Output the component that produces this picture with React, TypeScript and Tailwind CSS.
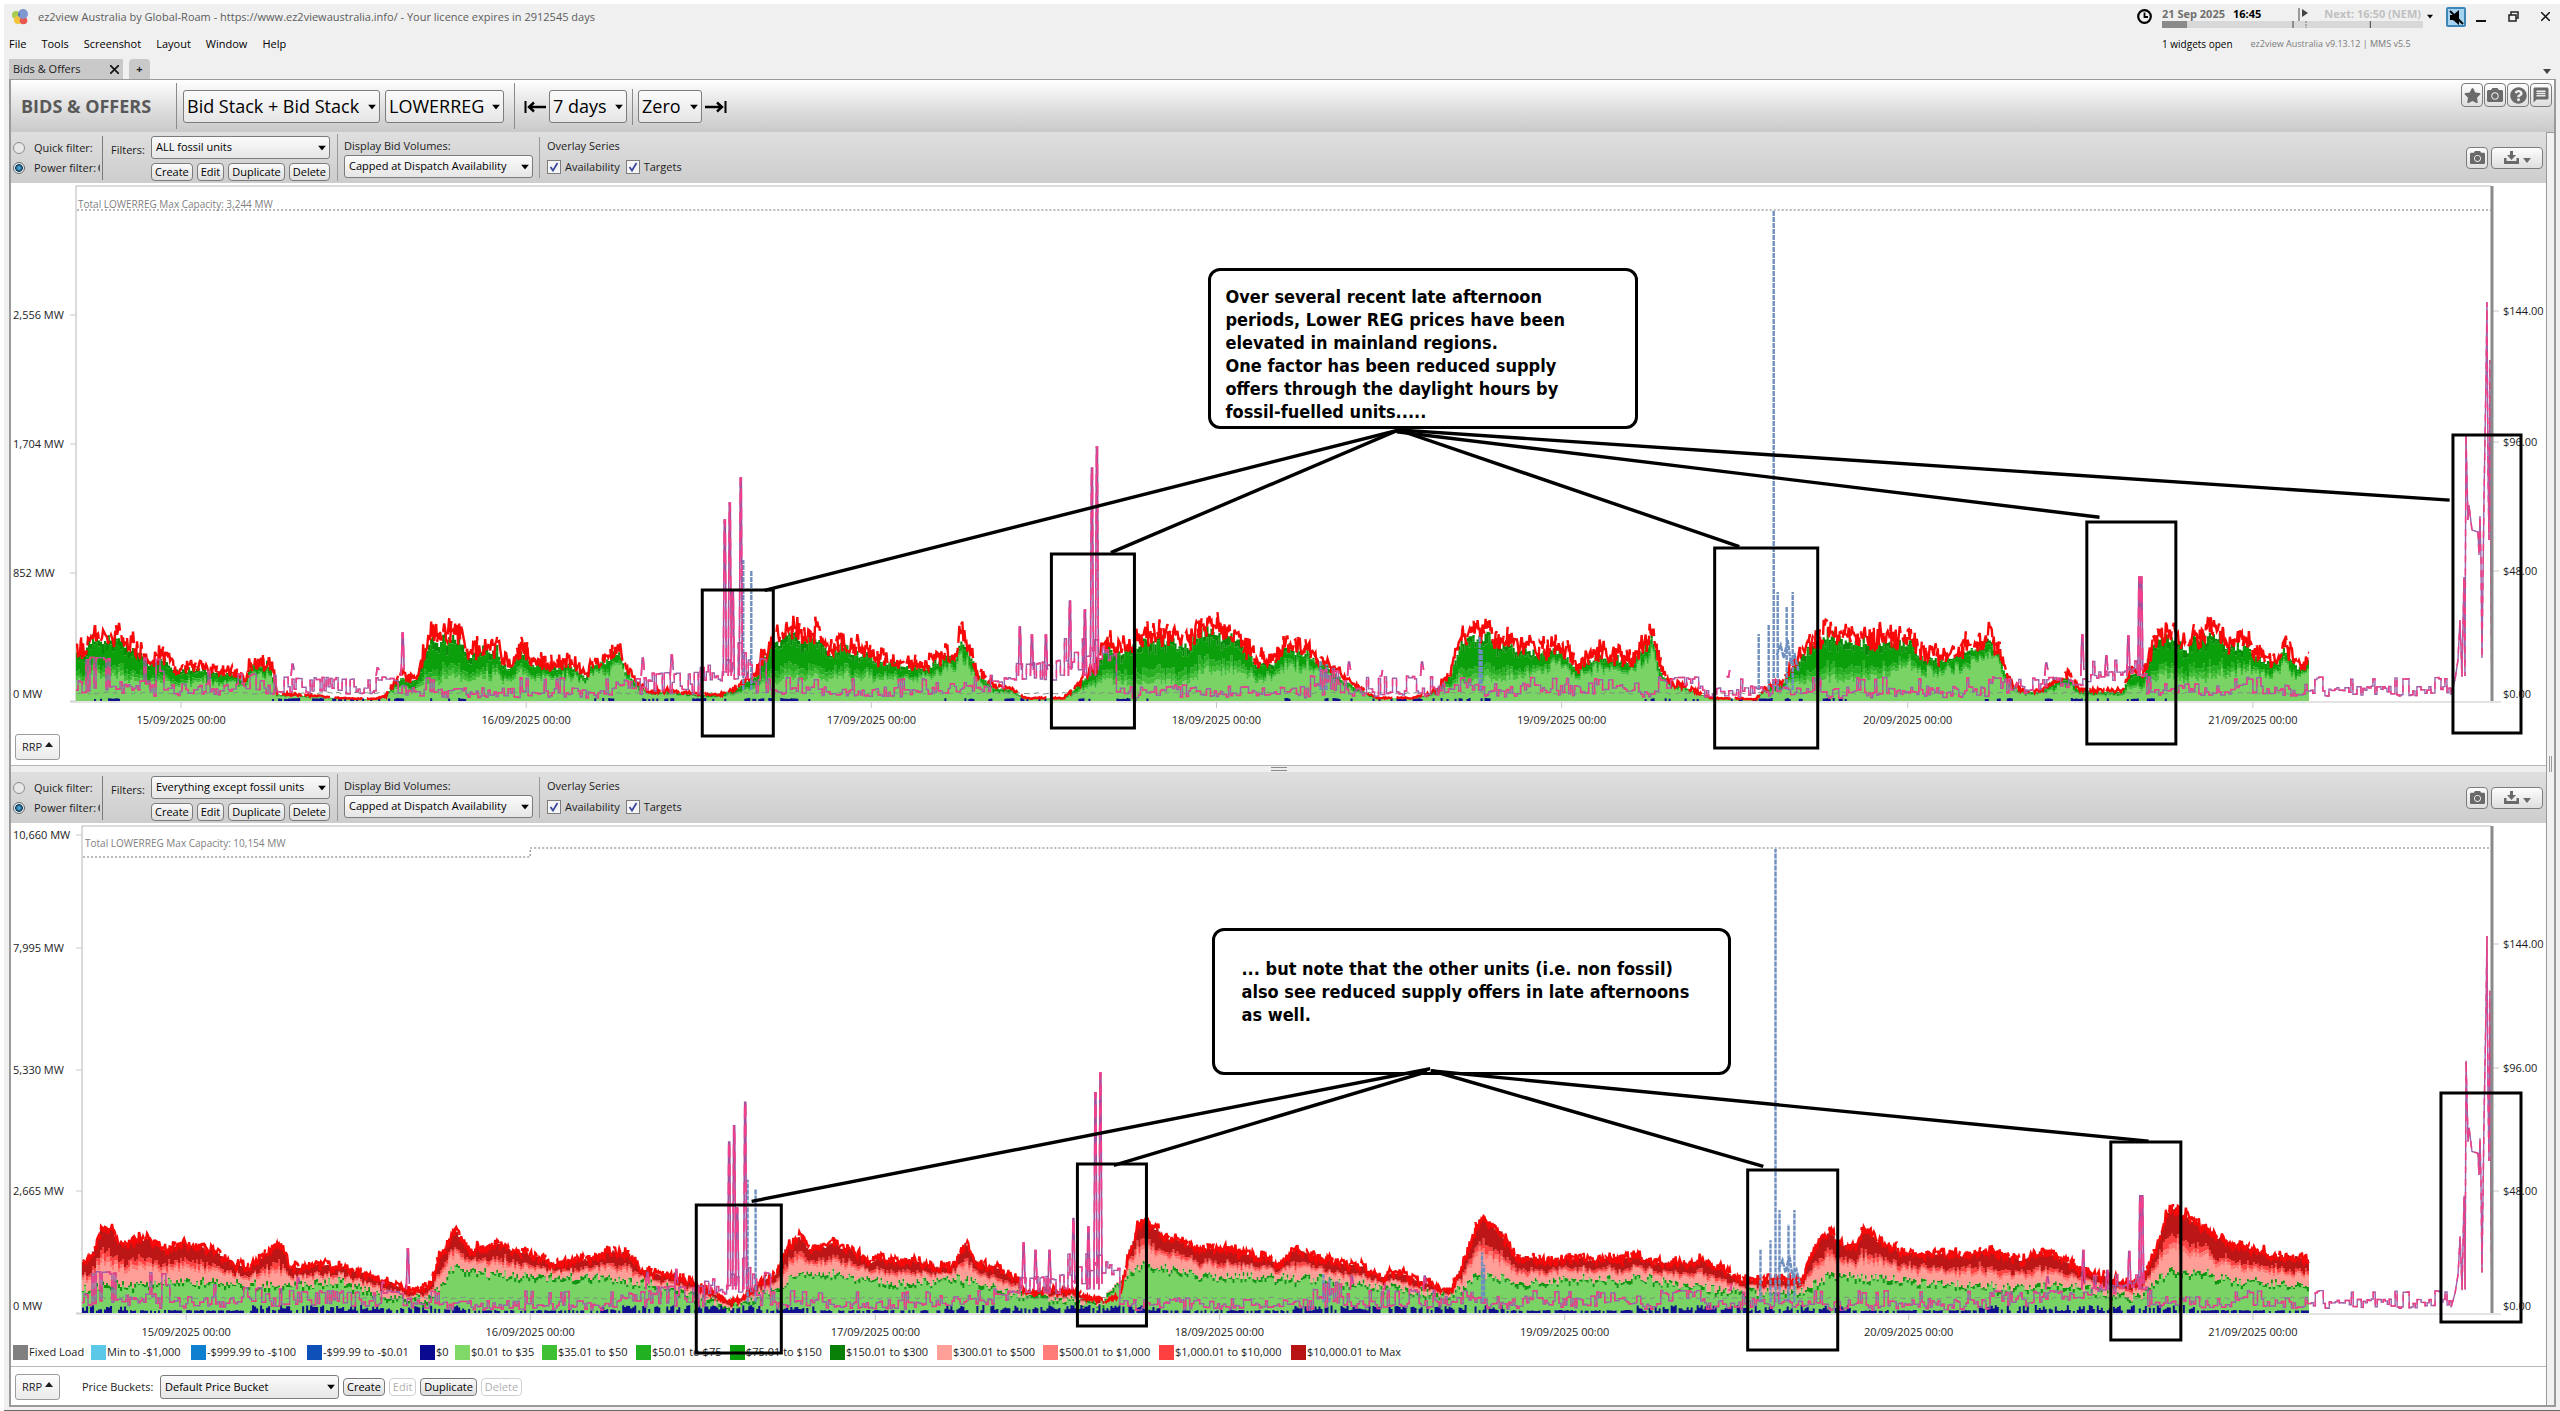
import React, { useState } from 'react';
import { FaCamera, FaQuestionCircle, FaStar } from 'react-icons/fa';
import { MdMessage } from 'react-icons/md';

type Point = [number, number];
type Rect = [number, number, number, number];

// small seeded generator, so the charts draw the same on every render
function makeRandom(seed: number) {
    let s = seed;
    return () => {
        s = (s + 0x6d2b79f5) | 0;
        let t = Math.imul(s ^ (s >>> 15), 1 | s);
        t = (t + Math.imul(t ^ (t >>> 7), 61 | t)) ^ t;
        return ((t ^ (t >>> 14)) >>> 0) / 4294967296;
    };
}

function valueAt(points: Point[], x: number) {
    if (x <= points[0][0]) return points[0][1];
    for (let i = 1; i < points.length; i++) {
        if (x <= points[i][0]) {
            const [x0, y0] = points[i - 1];
            const [x1, y1] = points[i];
            return y0 + ((y1 - y0) * (x - x0)) / (x1 - x0);
        }
    }
    return points[points.length - 1][1];
}

const LEFT = 11;
const WIDTH = 2534;
const BASE = 701;
const DATA_END = 2309;

// availability of the fossil units
const fossilTop: Point[] = [
    [76, 645], [85, 645], [90, 634], [105, 634], [120, 637], [135, 647], [142, 652], [152, 658], [165, 656], [180, 668],
    [200, 663], [215, 672], [230, 668], [245, 680], [250, 662], [270, 658], [274, 680], [277, 694], [300, 695], [340, 698],
    [375, 699], [385, 696], [395, 680], [415, 675], [422, 655], [430, 632], [455, 632], [460, 640], [470, 655], [485, 642],
    [500, 650], [510, 668], [520, 645], [530, 660], [550, 665], [575, 660], [585, 675], [592, 660], [610, 655], [618, 645],
    [625, 665], [632, 675], [640, 685], [650, 692], [670, 690], [700, 695], [720, 694], [735, 688], [755, 675], [765, 650],
    [775, 634], [800, 634], [820, 634], [830, 648], [845, 642], [860, 648], [887, 660], [915, 666], [942, 658], [955, 650],
    [961, 630], [969, 650], [975, 668], [992, 685], [1013, 690], [1024, 698], [1063, 698], [1079, 682], [1096, 662], [1107, 634],
    [1115, 647], [1123, 650], [1134, 637], [1162, 634], [1189, 642], [1200, 630], [1219, 627], [1238, 637], [1255, 655], [1271, 660],
    [1285, 642], [1304, 645], [1315, 655], [1332, 670], [1354, 685], [1376, 698], [1414, 698], [1436, 690], [1450, 670], [1461, 637],
    [1472, 630], [1491, 632], [1513, 642], [1529, 650], [1557, 648], [1578, 662], [1600, 652], [1628, 658], [1646, 640], [1652, 630],
    [1658, 660], [1666, 680], [1683, 686], [1710, 698], [1755, 699], [1763, 690], [1782, 682], [1790, 665], [1801, 655], [1812, 637],
    [1826, 633], [1865, 634], [1892, 640], [1911, 638], [1925, 652], [1947, 657], [1974, 647], [1988, 635], [1999, 650], [2007, 680],
    [2024, 692], [2040, 690], [2051, 682], [2067, 674], [2078, 690], [2122, 690], [2128, 672], [2142, 672], [2150, 650], [2161, 630],
    [2174, 630], [2185, 640], [2207, 627], [2218, 627], [2227, 645], [2246, 637], [2254, 652], [2270, 660], [2284, 650], [2298, 665],
    [2309, 655],
];

// share of the cheapest bucket in the fossil stack
const fossilCheap: Point[] = [
    [76, 0.4], [140, 0.4], [170, 0.5], [270, 0.7], [400, 0.6], [430, 0.3], [470, 0.4], [510, 0.55], [600, 0.7], [640, 0.7],
    [750, 0.5], [775, 0.3], [850, 0.45], [950, 0.72], [1080, 0.5], [1130, 0.3], [1180, 0.3], [1240, 0.5], [1330, 0.7], [1440, 0.6],
    [1465, 0.3], [1510, 0.4], [1560, 0.7], [1660, 0.75], [1780, 0.6], [1810, 0.3], [1880, 0.42], [1930, 0.65], [2000, 0.75], [2150, 0.4],
    [2210, 0.35], [2250, 0.6], [2309, 0.7],
];

// availability of everything else
const otherTop: Point[] = [
    [82, 1263], [90, 1260], [97, 1242], [102, 1229], [112, 1227], [118, 1245], [130, 1240], [150, 1240], [165, 1250], [180, 1242],
    [200, 1245], [215, 1252], [230, 1262], [250, 1267], [265, 1254], [278, 1244], [287, 1258], [290, 1268], [310, 1265], [345, 1268],
    [370, 1275], [395, 1285], [410, 1292], [430, 1285], [438, 1258], [455, 1232], [460, 1240], [470, 1250], [500, 1247], [525, 1252],
    [550, 1262], [590, 1260], [610, 1254], [627, 1250], [640, 1268], [670, 1275], [700, 1285], [715, 1294], [730, 1302], [742, 1298],
    [760, 1282], [775, 1275], [784, 1250], [800, 1236], [810, 1250], [830, 1247], [850, 1250], [870, 1260], [900, 1261], [930, 1264],
    [950, 1268], [966, 1244], [975, 1260], [1000, 1270], [1018, 1278], [1025, 1293], [1050, 1290], [1070, 1290], [1085, 1296], [1105, 1302],
    [1120, 1295], [1128, 1255], [1137, 1225], [1150, 1222], [1165, 1238], [1180, 1240], [1200, 1250], [1222, 1247], [1240, 1254], [1260, 1256],
    [1280, 1264], [1295, 1248], [1320, 1262], [1350, 1264], [1380, 1275], [1405, 1275], [1430, 1285], [1450, 1290], [1460, 1270], [1475, 1228],
    [1484, 1214], [1500, 1232], [1515, 1255], [1545, 1262], [1590, 1260], [1633, 1258], [1660, 1264], [1700, 1260], [1720, 1268], [1740, 1280],
    [1800, 1280], [1812, 1250], [1820, 1237], [1830, 1232], [1840, 1247], [1855, 1243], [1867, 1228], [1875, 1240], [1900, 1252], [1950, 1255],
    [1985, 1252], [2020, 1260], [2040, 1252], [2065, 1262], [2085, 1272], [2120, 1282], [2140, 1282], [2150, 1262], [2165, 1218], [2176, 1208],
    [2185, 1216], [2200, 1227], [2225, 1242], [2250, 1247], [2270, 1257], [2309, 1258],
];

const otherGreen: Point[] = [
    [82, 1290], [110, 1285], [200, 1280], [280, 1285], [340, 1282], [400, 1298], [430, 1298], [455, 1268], [500, 1275], [600, 1278],
    [650, 1282], [700, 1298], [730, 1306], [770, 1292], [800, 1272], [900, 1283], [960, 1278], [1020, 1294], [1100, 1304], [1135, 1265],
    [1150, 1265], [1200, 1275], [1300, 1278], [1400, 1288], [1450, 1296], [1480, 1272], [1520, 1282], [1640, 1278], [1740, 1292], [1800, 1290],
    [1830, 1274], [1900, 1280], [2000, 1287], [2060, 1285], [2140, 1298], [2160, 1276], [2180, 1270], [2240, 1280], [2309, 1287],
];

// regional price: from x, usual level, jitter, chance of a step, level of the step
const priceRanges: [number, number, number, number, number][] = [
    [76, 688, 8, 0.28, 657], [160, 690, 6, 0.14, 670], [230, 687, 7, 0.2, 674], [275, 690, 4, 0.45, 677], [390, 690, 6, 0.2, 678],
    [440, 693, 5, 0.08, 677], [600, 688, 8, 0.25, 677], [650, 688, 7, 0.4, 672], [700, 673, 8, 0.1, 665], [725, 660, 20, 0.1, 650],
    [748, 670, 12, 0.2, 690], [765, 692, 5, 0.12, 677], [935, 688, 6, 0.1, 677], [990, 682, 7, 0.3, 677], [1016, 664, 2, 0.2, 678],
    [1055, 662, 14, 0.2, 636], [1085, 650, 12, 0.2, 660], [1098, 655, 24, 0.2, 690], [1120, 692, 6, 0.1, 685], [1310, 685, 10, 0.2, 668],
    [1345, 692, 5, 0.2, 676], [1436, 690, 7, 0.08, 677], [1655, 686, 8, 0.5, 677], [1700, 692, 6, 0.15, 677], [1990, 688, 6, 0.5, 677],
    [2065, 684, 6, 0.1, 677], [2090, 676, 5, 0.1, 660], [2124, 672, 5, 0.1, 660], [2146, 690, 6, 0.12, 677], [2309, 691, 5, 0.22, 677],
];

const priceSpikes: Point[] = [
    [292, 664], [377, 668], [402, 633], [642, 658], [671, 655], [724, 520], [729, 503], [732, 590], [740, 478], [1019, 627],
    [1031, 635], [1045, 635], [1069, 601], [1084, 610], [1091, 468], [1096, 447], [1348, 662], [1380, 676], [1421, 662], [1727, 677],
    [2045, 663], [2081, 635], [2105, 656], [2127, 636], [2138, 577], [2140, 577],
];

const priceTail: Point[] = [
    [2454, 680], [2457, 660], [2459, 620], [2461, 677], [2463, 577], [2464, 676], [2465, 434], [2467, 520], [2468, 505], [2471, 530],
    [2477, 532], [2478, 555], [2479, 516], [2480, 560], [2481, 658], [2483, 500], [2485, 380], [2486, 302], [2487, 470], [2488, 540],
    [2489, 360], [2490, 600], [2491, 701],
];

const blueSpikes: Point[] = [
    [743, 560], [751, 570], [1320, 660], [1326, 664], [1479, 637], [1481, 650], [1758, 634], [1768, 624], [1773, 210], [1777, 592],
    [1786, 607], [1792, 592],
];

interface ChartProps {
    top: number;
    height: number;
    left: number;
    base: number;
    gridTop: number;
    cap: string;
    capLabel: [number, number, string];
    availability: Point[];
    greens?: Point[];
    priceScale: number;
    yLabels: [string, number][];
    priceLabels: [string, number][];
    dates: number[];
    boxes: Rect[];
    lines: Rect[];
    note: Rect;
    children: React.ReactNode;
    legend?: React.ReactNode;
}

const greenColors = ['#7ad465', '#46bf3a', '#27b021', '#0c9f0c', '#078a07'];
const redColors = ['#7ad465', '#129612', '#ff9e96', '#ff7b76', '#ff4242', '#bd1616'];

function buildStack(p: ChartProps) {
    const random = makeRandom(p.top);
    const colors = p.greens ? redColors : greenColors;
    const paths = colors.map(() => '');
    let navy = '';
    let red = '';
    let mean = '';
    let drift = 0;
    for (let x = p.left + 1; x < DATA_END; x += 2) {
        drift = drift * 0.6 + (random() - 0.5) * (p.greens ? 0.07 : 0.12);
        const edge = p.base - (p.base - valueAt(p.availability, x)) * (1 + drift);
        const h = p.base - edge;
        let cuts: number[];
        if (p.greens) {
            const g = (p.base - valueAt(p.greens, x)) * (1 + drift) + (random() - 0.5) * 9;
            const rest = Math.max(h - g - 2, 2);
            const pink = 0.28 + random() * 0.15;
            cuts = [g - 1 - random() * 4, g, g + rest * pink, g + rest * (pink + 0.1), g + rest * (pink + 0.16 + random() * 0.12), h];
        } else {
            const full = h * (0.84 + random() * 0.14);
            const cheap = full * valueAt(fossilCheap, x) * (0.85 + random() * 0.35);
            const rest = Math.max(full - cheap, 0);
            cuts = [cheap, cheap + rest * 0.14, cheap + rest * (0.24 + random() * 0.12), cheap + rest * (0.7 + random() * 0.25), full];
        }
        let from = 0;
        cuts.forEach((cut, i) => {
            if (cut > from) {
                paths[i] += `M${x} ${(p.base - from).toFixed(1)}V${(p.base - cut).toFixed(1)}`;
                from = cut;
            }
        });
        const night = Math.abs(((x - p.left - 150 + 3450) % 345) - 130) < 110;
        if (p.greens ? random() < 0.7 : night && drift > 0.02) {
            navy += `M${x} ${p.base}v-${(2 + random() * (p.greens ? (night ? 6 : 1) : 1)).toFixed(1)}`;
        }
        const swing = Math.min(h * 0.4, p.greens ? 10 : 22);
        red += `${red ? 'L' : 'M'}${x} ${(edge + (random() - 0.6) * swing).toFixed(1)}L${x + 1} ${(edge + (random() - 0.4) * swing).toFixed(1)}`;
        mean += `${mean ? 'L' : 'M'}${x} ${(p.base - (p.greens ? 16 : 9) + random() * 2).toFixed(1)}`;
    }
    return { paths, colors, navy, red, mean };
}

function buildPrice(p: ChartProps) {
    const random = makeRandom(77);
    const toX = (x: number) => (p.left + ((x - 76) * (2491 - p.left)) / (2491 - 76)).toFixed(1);
    const toY = (y: number) => (p.base - (BASE - y) * p.priceScale).toFixed(1);
    let d = `M${p.left} ${toY(690)}`;
    let spikes = '';
    let hold = 0;
    let y = 690;
    for (let x = 78; x < 2452; x += 2) {
        const range = priceRanges.filter((r) => r[0] <= x).pop() || priceRanges[0];
        if (hold > 0) {
            hold--;
        } else {
            y = random() < range[3] ? range[4] + random() * 3 : range[1] + (random() - 0.5) * 2 * range[2];
            hold = random() < 0.25 ? 1 : 0;
        }
        d += `H${toX(x)}V${toY(Math.min(y, 700))}`;
    }
    priceTail.forEach(([px, py]) => {
        d += `L${toX(px)} ${toY(py)}`;
    });
    priceSpikes.forEach(([sx, sy]) => {
        spikes += `M${toX(sx - 1)} ${toY(676)}L${toX(sx)} ${toY(sy)}h1L${toX(sx + 2)} ${toY(670)}`;
    });
    let blue = '';
    blueSpikes.forEach(([bx, by]) => {
        blue += `M${toX(bx)} ${toY(690)}V${toY(by)}`;
    });
    blue += `M${toX(1776)} ${toY(655)}L${toX(1780)} ${toY(645)}L${toX(1783)} ${toY(658)}L${toX(1787)} ${toY(640)}L${toX(1790)} ${toY(662)}L${toX(1794)} ${toY(655)}L${toX(1798)} ${toY(672)}`;
    return { d, spikes, blue };
}

function Chart(props: ChartProps) {
    const { top, height, left, base } = props;
    const stack = buildStack(props);
    const price = buildPrice(props);
    const px = (x: number) => `${((x - LEFT) / WIDTH) * 100}%`;
    const py = (y: number) => `${((y - top) / height) * 100}%`;
    const viewBox = `${LEFT} ${top} ${WIDTH} ${height}`;

    return (
        <div className={`relative flex flex-col justify-end bg-white ${height === 582 ? 'h-[582px]' : 'h-[543px]'}`}>
            <svg className="absolute inset-0 h-full w-full" viewBox={viewBox} preserveAspectRatio="none" aria-hidden="true">
                <g fill="none">
                    <path d={`M${left} ${base}V${props.gridTop}H2490`} stroke="#b8b8b8" />
                    <path d={`M${left - 6} ${base + 1}H2500`} stroke="#c8c8c8" />
                    {props.dates.map((x) => (
                        <path key={x} d={`M${x} ${base + 1}v6`} stroke="#c8c8c8" />
                    ))}
                    {props.yLabels.map(([, y], i) => (
                        <path key={y} d={`M${left - 6} ${i === props.yLabels.length - 1 ? base : y}h6`} stroke="#c8c8c8" />
                    ))}
                    {props.priceLabels.slice(0, -1).map(([, y]) => (
                        <path key={y} d={`M2492 ${y}h6`} stroke="#c8c8c8" />
                    ))}
                    <path d={props.cap} stroke="#777" strokeDasharray="2 2" />
                    {stack.paths.map((d, i) => (
                        <path key={i} d={d} stroke={stack.colors[i]} strokeWidth="2.2" />
                    ))}
                    <path d={stack.navy} stroke="#10108c" strokeWidth="2" />
                    <path d={stack.mean} stroke="#7d9480" strokeDasharray="6 4" />
                    <path d={stack.red} stroke="#f80808" strokeWidth="2.4" strokeDasharray="30 5" />
                    <path d={price.blue} stroke="#6f8fbf" strokeWidth="2.4" strokeDasharray="5 1" />
                    <path d={price.d} stroke="#9a62a8" strokeWidth="1.4" />
                    <path d={price.d} stroke="#ee3f86" strokeWidth="1.5" strokeDasharray="7 6" />
                    <path d={price.spikes} stroke="#a0509c" strokeWidth="1.6" />
                    <path d={price.spikes} stroke="#f0408c" strokeWidth="1.6" strokeDasharray="12 7" />
                    <path d={`M2491 ${base}V${props.gridTop}`} stroke="#8a8a8a" strokeWidth="3" />
                </g>
            </svg>

            {props.yLabels.map(([text, y]) => (
                <span key={text} className="absolute left-[2px] -translate-y-1/2 leading-4" style={{ top: py(y) }}>
                    {text}
                </span>
            ))}
            {props.priceLabels.map(([text, y]) => (
                <span key={text} className="absolute -translate-y-1/2 leading-4" style={{ top: py(y), left: px(2502) }}>
                    {text}
                </span>
            ))}
            {props.dates.map((x, i) => (
                <span
                    key={x}
                    className="absolute -translate-x-1/2 -translate-y-1/2 leading-4 whitespace-nowrap"
                    style={{ top: py(base + 19), left: px(x) }}
                >
                    {15 + i}/09/2025 00:00
                </span>
            ))}
            <span
                className="absolute -translate-y-1/2 text-[10px] leading-4 text-[#808080]"
                style={{ left: px(props.capLabel[0]), top: py(props.capLabel[1]) }}
            >
                {props.capLabel[2]}
            </span>

            {props.legend}

            {/* markup drawn over the chart */}
            <svg
                className="pointer-events-none absolute inset-0 h-full w-full"
                viewBox={viewBox}
                preserveAspectRatio="none"
                aria-hidden="true"
            >
                <g fill="none" stroke="#000">
                    {props.boxes.map(([x0, y0, x1, y1]) => (
                        <rect key={x0} x={x0 + 1} y={y0 + 1} width={x1 - x0 - 3} height={y1 - y0 - 2} strokeWidth="3" />
                    ))}
                    {props.lines.map(([x0, y0, x1, y1]) => (
                        <path key={x1} d={`M${x0} ${y0}L${x1} ${y1}`} strokeWidth="3.4" strokeLinecap="square" />
                    ))}
                </g>
            </svg>
            <div
                className="absolute rounded-[12px] border-[3px] border-black text-[18px] leading-[23px] font-bold text-black"
                style={{
                    left: px(props.note[0]),
                    top: py(props.note[1]),
                    width: `${((props.note[2] - props.note[0]) / WIDTH) * 100}%`,
                    height: `${((props.note[3] - props.note[1]) / height) * 100}%`,
                    fontFamily: '"DejaVu Sans Condensed", "DejaVu Sans", sans-serif',
                }}
            >
                {props.children}
            </div>
        </div>
    );
}

function Caret({ className }: { className: string }) {
    return (
        <svg className={className} viewBox="0 0 8 5" width="8" height="5" aria-hidden="true">
            <path d="M0 0h8L4 5z" fill="currentColor" />
        </svg>
    );
}

interface PickerProps {
    label: string;
    value: string;
    className: string;
}

function Picker({ label, value, className }: PickerProps) {
    return (
        <span className="relative inline-flex self-start">
            <select
                aria-label={label}
                defaultValue={value}
                className={`appearance-none border border-[#7c7c7c] bg-linear-to-b from-[#fbfbfb] to-[#e6e6e6] text-black ${className}`}
            >
                <option>{value}</option>
            </select>
            <Caret className="pointer-events-none absolute top-1/2 right-[4px] -translate-y-1/2 text-black" />
        </span>
    );
}

function SmallButton({ text, disabled = false }: { text: string; disabled?: boolean }) {
    return (
        <button
            type="button"
            disabled={disabled}
            className="h-[18px] rounded-[4px] border border-[#7c7c7c] bg-linear-to-b from-[#fafafa] to-[#dedede] px-[3px] leading-[14px] whitespace-nowrap text-black disabled:border-[#d0d0d0] disabled:bg-none disabled:text-[#b0b0b0]"
        >
            {text}
        </button>
    );
}

function IconButton({ label, className, children }: { label: string; className: string; children: React.ReactNode }) {
    return (
        <button
            type="button"
            aria-label={label}
            className={`flex items-center justify-center rounded-[4px] border border-[#7c7c7c] bg-linear-to-b from-[#fdfdfd] to-[#dedede] text-[#6a6a6a] ${className}`}
        >
            {children}
        </button>
    );
}

function CheckItem({ text }: { text: string }) {
    const [on, setOn] = useState(true);
    return (
        <label className="relative flex items-center gap-[4px]">
            <input
                type="checkbox"
                checked={on}
                onChange={() => setOn(!on)}
                className="h-[14px] w-[14px] appearance-none border border-[#7c7c7c] bg-[#f4f4f4]"
            />
            {on && (
                <svg className="pointer-events-none absolute left-[2px]" width="10" height="10" viewBox="0 0 10 10" aria-hidden="true">
                    <path d="M1.5 5l2.5 3.5L8.5 1" fill="none" stroke="#3b4aa0" strokeWidth="1.8" />
                </svg>
            )}
            {text}
        </label>
    );
}

function FilterBar({ id, filter }: { id: string; filter: string }) {
    const [mode, setMode] = useState('Power');
    return (
        <div className="flex h-[51px] items-center bg-linear-to-b from-[#dfdfdf] to-[#cdcdcd] pr-[3px]">
            <div className="flex h-[44px] w-[92px] flex-col justify-between overflow-hidden border-r border-[#7a7a7a] py-[4px] pl-[2px]">
                {['Quick', 'Power'].map((name) => (
                    <label key={name} className="flex items-center gap-[9px] leading-4 whitespace-nowrap">
                        <input
                            type="radio"
                            name={`${id}-mode`}
                            checked={mode === name}
                            onChange={() => setMode(name)}
                            className="h-[12px] w-[12px] shrink-0 appearance-none rounded-full border border-[#8c8c8c] bg-[#e8e8e8] checked:border-[#666] checked:bg-[radial-gradient(circle,#5cc4ee_0,#123f63_50%,#f0f0f0_60%)]"
                        />
                        <span className="flex w-[66px] items-center justify-between">
                            {name} filter:
                            {name === 'Power' && (
                                <svg width="4" height="8" viewBox="0 0 4 8" aria-hidden="true">
                                    <path d="M4 0Q0 4 4 8z" fill="#555" />
                                </svg>
                            )}
                        </span>
                    </label>
                ))}
            </div>
            <div className="flex h-[47px] gap-[6px] border-r border-[#9a9a9a] pt-[2px] pr-[7px] pl-[8px]">
                <span className="mt-[6px] leading-4">Filters:</span>
                <div className="flex w-[179px] flex-col gap-[4px]">
                    <Picker label="Filters" value={filter} className="h-[23px] w-[179px] rounded-[3px] pl-[4px]" />
                    <div className="flex justify-between">
                        <SmallButton text="Create" />
                        <SmallButton text="Edit" />
                        <SmallButton text="Duplicate" />
                        <SmallButton text="Delete" />
                    </div>
                </div>
            </div>
            <div className="flex h-[41px] w-[202px] flex-col border-r border-[#9a9a9a] pl-[6px]">
                <span className="leading-[18px]">Display Bid Volumes:</span>
                <Picker
                    label="Display Bid Volumes"
                    value="Capped at Dispatch Availability"
                    className="h-[23px] w-[189px] rounded-[3px] pl-[4px]"
                />
            </div>
            <div className="flex h-[41px] flex-col gap-[4px] pl-[7px]">
                <span className="leading-[18px]">Overlay Series</span>
                <div className="flex gap-[6px] leading-4">
                    <CheckItem text="Availability" />
                    <CheckItem text="Targets" />
                </div>
            </div>
            <div className="ml-auto flex gap-[3px]">
                <IconButton label="Copy chart" className="h-[22px] w-[22px]">
                    <FaCamera size={15} />
                </IconButton>
                <IconButton label="Export" className="h-[22px] w-[52px] gap-[4px]">
                    <svg width="15" height="13" viewBox="0 0 15 13" aria-hidden="true">
                        <path d="M6 0h3v4h3L7.500 9 3 4h3zM0 7h2.500v3h10V7H15v6H0z" fill="currentColor" />
                    </svg>
                    <Caret className="mt-[5px]" />
                </IconButton>
            </div>
        </div>
    );
}

function RrpButton() {
    return (
        <button
            type="button"
            className="flex h-[26px] w-[45px] items-center justify-center gap-[3px] rounded-[3px] border border-[#9c9c9c] bg-linear-to-b from-[#fdfdfd] to-[#ebebeb]"
        >
            RRP
            <Caret className="mb-[5px] rotate-180" />
        </button>
    );
}

const legendItems = [
    ['#808080', 'Fixed Load', 'w-[78px]'],
    ['#5bc8e8', 'Min to -$1,000', 'w-[100px]'],
    ['#0f7fd0', '-$999.99 to -$100', 'w-[116px]'],
    ['#0f50b8', '-$99.99 to -$0.01', 'w-[113px]'],
    ['#0a0a90', '$0', 'w-[35px]'],
    ['#80d868', '$0.01 to $35', 'w-[87px]'],
    ['#3fbf33', '$35.01 to $50', 'w-[94px]'],
    ['#20b020', '$50.01 to $75', 'w-[94px]'],
    ['#0ba00b', '$75.01 to $150', 'w-[100px]'],
    ['#088008', '$150.01 to $300', 'w-[107px]'],
    ['#ffa098', '$300.01 to $500', 'w-[106px]'],
    ['#ff7c78', '$500.01 to $1,000', 'w-[116px]'],
    ['#ff4040', '$1,000.01 to $10,000', 'w-[132px]'],
    ['#b81414', '$10,000.01 to Max', 'w-[120px]'],
];

function Legend() {
    return (
        <ul className="mb-[6px] flex pl-[2px] leading-4">
            {legendItems.map(([color, text, width]) => (
                <li key={text} className={`flex shrink-0 items-center gap-px whitespace-nowrap ${width}`}>
                    <span className="h-[15px] w-[15px] shrink-0" style={{ backgroundColor: color }} />
                    {text}
                </li>
            ))}
        </ul>
    );
}

function TitleBar() {
    return (
        <header className="flex justify-between">
            <div>
                <div className="flex h-[26px] items-center gap-[9px] pl-[8px] text-[#5c5c5c]">
                    <svg width="17" height="16" viewBox="0 0 17 16" aria-hidden="true">
                        <circle cx="4" cy="6" r="4" fill="#a8cc50" />
                        <circle cx="6" cy="11" r="4" fill="#f2c53c" />
                        <circle cx="11.500" cy="11.500" r="3.800" fill="#e8564e" />
                        <circle cx="11" cy="5" r="5" fill="#8098d0" />
                        <path d="M7 3a5 5 0 0 1 0 5 5 5 0 0 1 0-5z" fill="#4468b0" />
                    </svg>
                    <h1>ez2view Australia by Global-Roam - https://www.ez2viewaustralia.info/ - Your licence expires in 2912545 days</h1>
                </div>
                <nav className="flex h-[29px] items-center gap-[15px] pl-[5px] text-black">
                    {['File', 'Tools', 'Screenshot', 'Layout', 'Window', 'Help'].map((item) => (
                        <button key={item} type="button">
                            {item}
                        </button>
                    ))}
                </nav>
            </div>
            <div className="flex pr-[10px]">
                <svg className="mt-[5px] mr-[10px]" width="15" height="15" viewBox="0 0 15 15" aria-hidden="true">
                    <circle cx="7.500" cy="7.500" r="6.300" fill="none" stroke="#000" strokeWidth="2.200" />
                    <path d="M7.500 3.500v4.500h3.500" fill="none" stroke="#000" strokeWidth="1.800" />
                </svg>
                <div className="w-[261px]">
                    <div className="flex h-[17px] items-end font-bold whitespace-nowrap text-[#707070]">
                        <span className="leading-[15px]">21 Sep 2025</span>
                        <span className="ml-[8px] leading-[15px] text-black">16:45</span>
                        <svg className="ml-auto" width="12" height="13" viewBox="0 0 12 13" aria-hidden="true">
                            <path d="M1 0v13" stroke="#444" />
                            <path d="M4 1l6 4-6 4z" fill="#444" />
                        </svg>
                        <span className="mr-[2px] ml-[14px] leading-[15px] text-[#c0c0c0]">Next: 16:50 (NEM)</span>
                    </div>
                    <svg className="block h-[7px] w-full" viewBox="0 0 260 7" preserveAspectRatio="none" aria-hidden="true">
                        <path d="M0 0h260v7H0z" fill="#d8d8d8" />
                        <path d="M0 0h25v7H0z" fill="#8a8a8a" />
                        <path d="M130.500 0v7M207.500 0v7" stroke="#444" />
                        <path d="M143.500 0v7" stroke="#777" strokeDasharray="2 1" />
                    </svg>
                    <div className="mt-[8px] flex items-center gap-[18px] text-[10px] leading-4 whitespace-nowrap">
                        <span className="text-black">1 widgets open</span>
                        <span className="text-[9px] text-[#7c7c7c]">ez2view Australia v9.13.12 | MMS v5.5</span>
                    </div>
                </div>
                <Caret className="mt-[10px] ml-[4px] w-[6px] text-black" />
                <button
                    type="button"
                    aria-label="Mute"
                    className="mt-[3px] ml-[13px] flex h-[20px] w-[20px] items-center justify-center rounded-[2px] border-2 border-[#3f86b8] bg-[#a5d3f0] text-black"
                >
                    <svg width="15" height="15" viewBox="0 0 15 15" aria-hidden="true">
                        <path d="M1 5h3l6-5v15l-6-5H1z" fill="#000" />
                        <path d="M1 1l13 13" stroke="#000" strokeWidth="2" />
                    </svg>
                </button>
                <button type="button" aria-label="Minimise" className="mt-[6px] ml-[10px] h-[12px]">
                    <svg width="10" height="12" viewBox="0 0 10 12">
                        <path d="M0 11h10" stroke="#111" strokeWidth="2" />
                    </svg>
                </button>
                <button type="button" aria-label="Restore" className="mt-[7px] ml-[22px] h-[11px]">
                    <svg width="11" height="11" viewBox="0 0 11 11" fill="none" stroke="#222" strokeWidth="1.500">
                        <path d="M1 4h7v6H1zM3 4V1h7v6H8" />
                    </svg>
                </button>
                <button type="button" aria-label="Close" className="mt-[8px] ml-[22px] h-[9px]">
                    <svg width="9" height="9" viewBox="0 0 9 9">
                        <path d="M0 0l9 9M9 0L0 9" stroke="#111" strokeWidth="1.500" />
                    </svg>
                </button>
            </div>
        </header>
    );
}

function JumpArrow({ flip = false }: { flip?: boolean }) {
    return (
        <button type="button" aria-label={flip ? 'Latest' : 'Earliest'} className={flip ? 'rotate-180' : ''}>
            <svg width="22" height="12" viewBox="0 0 22 12" aria-hidden="true">
                <path d="M1.500 0v12" stroke="#000" strokeWidth="2" />
                <path d="M5 6h17M10 1.500L5 6l5 4.500" fill="none" stroke="#000" strokeWidth="2.400" />
            </svg>
        </button>
    );
}

function WidgetHeader() {
    return (
        <div className="flex h-[52px] bg-linear-to-b from-white via-[#e2e2e2] to-[#c9c9c9] pr-[2px]">
            <h2 className="my-[3px] flex w-[166px] items-center border-r border-[#8a8a8a] pl-[10px] text-[18px] font-bold text-[#595959]">
                BIDS &amp; OFFERS
            </h2>
            <div className="my-[3px] flex w-[338px] gap-[5px] border-r border-[#8a8a8a] pt-[7px] pl-[6px] text-[18px]">
                <Picker label="View" value="Bid Stack + Bid Stack" className="h-[33px] w-[197px] rounded-[3px] pl-[3px]" />
                <Picker label="Service" value="LOWERREG" className="h-[33px] w-[119px] rounded-[3px] pl-[3px]" />
            </div>
            <div className="my-[10px] flex h-[33px] items-center gap-[3px] pl-[9px] text-[18px]">
                <JumpArrow />
                <Picker label="Range" value="7 days" className="h-[33px] w-[78px] rounded-[3px] pl-[3px]" />
                <span className="mx-[2px] h-[36px] w-px bg-[#8a8a8a]" />
                <Picker label="Offset" value="Zero" className="h-[33px] w-[64px] rounded-[3px] pl-[3px]" />
                <JumpArrow flip />
            </div>
            <div className="mt-[3px] ml-auto flex gap-px">
                <IconButton label="Favourite" className="h-[24px] w-[22px]">
                    <FaStar size={17} />
                </IconButton>
                <IconButton label="Snapshot" className="h-[24px] w-[22px]">
                    <FaCamera size={16} />
                </IconButton>
                <IconButton label="Help" className="h-[24px] w-[22px]">
                    <FaQuestionCircle size={17} />
                </IconButton>
                <IconButton label="Comment" className="h-[24px] w-[22px]">
                    <MdMessage size={18} />
                </IconButton>
            </div>
        </div>
    );
}

const fossilDates = [181, 526, 871, 1216, 1561, 1907, 2252];
const otherDates = [186, 530, 875, 1219, 1564, 1908, 2252];

function App() {
    return (
        <div className="min-h-screen bg-white pt-[4px] pl-[4px] font-['Open_Sans','Noto_Sans',sans-serif] text-[11px] text-[#1c1c1c]">
            <div className="bg-[#f0f0f0]">
                <TitleBar />
                <div className="flex h-[20px] gap-[6px] pr-[9px] pl-[5px]">
                    <div className="flex w-[114px] items-center justify-between bg-[#c9c9c9] px-[4px]">
                        <span>Bids &amp; Offers</span>
                        <button type="button" aria-label="Close tab">
                            <svg width="9" height="9" viewBox="0 0 9 9">
                                <path d="M0 0l9 9M9 0L0 9" stroke="#111" strokeWidth="1.600" />
                            </svg>
                        </button>
                    </div>
                    <button type="button" className="w-[21px] rounded-t-[4px] bg-[#c9c9c9] font-bold">
                        +
                    </button>
                    <Caret className="mt-[10px] ml-auto text-[#444]" />
                </div>

                <div className="mr-[4px] ml-[5px] border-2 border-t border-[#9a9a9a]">
                    <WidgetHeader />
                    <div className="flex">
                        <main className="min-w-0 flex-1 bg-white">
                            <FilterBar id="fossil" filter="ALL fossil units" />
                            <Chart
                                top={183}
                                height={582}
                                left={76}
                                base={701}
                                gridTop={186}
                                cap="M77 210H2490"
                                capLabel={[78, 204, 'Total LOWERREG Max Capacity: 3,244 MW']}
                                availability={fossilTop}
                                priceScale={1}
                                yLabels={[['2,556 MW', 315], ['1,704 MW', 444], ['852 MW', 573], ['0 MW', 694]]}
                                priceLabels={[['$144.00', 311], ['$96.00', 442], ['$48.00', 571], ['$0.00', 694]]}
                                dates={fossilDates}
                                boxes={[[701, 589, 775, 737], [1050, 553, 1136, 729], [1713, 547, 1819, 749], [2085, 521, 2177, 745], [2451, 434, 2522, 734]]}
                                lines={[[1398, 430, 766, 590], [1398, 430, 1112, 552], [1398, 430, 1737, 546], [1398, 432, 2097, 517], [1398, 430, 2447, 500]]}
                                note={[1208, 268, 1637, 429]}
                                legend={
                                    <div className="mb-[5px] pl-[4px]">
                                        <RrpButton />
                                    </div>
                                }
                            >
                                <p className="pt-[14px] pl-[14px] whitespace-nowrap">
                                    Over several recent late afternoon
                                    <br />
                                    periods, Lower REG prices have been
                                    <br />
                                    elevated in mainland regions.
                                    <br />
                                    One factor has been reduced supply
                                    <br />
                                    offers through the daylight hours by
                                    <br />
                                    fossil-fuelled units.....
                                </p>
                            </Chart>

                            <div className="flex h-[7px] items-center justify-center border-t border-[#b8b8b8] bg-[#efefef]">
                                <span className="h-[4px] w-[16px] border-y border-[#8a8a8a]" />
                            </div>

                            <FilterBar id="other" filter="Everything except fossil units" />
                            <Chart
                                top={823}
                                height={543}
                                left={82}
                                base={1313}
                                gridTop={826}
                                cap="M83 857H530V848H2490"
                                capLabel={[85, 843, 'Total LOWERREG Max Capacity: 10,154 MW']}
                                availability={otherTop}
                                greens={otherGreen}
                                priceScale={0.945}
                                yLabels={[['10,660 MW', 835], ['7,995 MW', 948], ['5,330 MW', 1070], ['2,665 MW', 1191], ['0 MW', 1306]]}
                                priceLabels={[['$144.00', 944], ['$96.00', 1068], ['$48.00', 1191], ['$0.00', 1306]]}
                                dates={otherDates}
                                boxes={[[695, 1204, 783, 1354], [1076, 1163, 1148, 1327], [1746, 1169, 1839, 1351], [2109, 1141, 2182, 1341], [2439, 1092, 2522, 1323]]}
                                lines={[[1428, 1069, 753, 1201], [1425, 1072, 1115, 1165], [1432, 1071, 1761, 1166], [1432, 1071, 2146, 1141]]}
                                note={[1212, 928, 1730, 1075]}
                                legend={<Legend />}
                            >
                                <p className="pt-[26px] pl-[26px] whitespace-nowrap">
                                    ... but note that the other units (i.e. non fossil)
                                    <br />
                                    also see reduced supply offers in late afternoons
                                    <br />
                                    as well.
                                </p>
                            </Chart>

                            <footer className="flex h-[39px] items-center border-t border-[#b8b8b8] pt-[2px] pl-[4px]">
                                <RrpButton />
                                <span className="ml-[22px] w-[78px]">Price Buckets:</span>
                                <div className="flex">
                                    <Picker label="Price Buckets" value="Default Price Bucket" className="h-[24px] w-[179px] rounded-[3px] pl-[4px]" />
                                </div>
                                <div className="ml-[4px] flex gap-[4px]">
                                    <SmallButton text="Create" />
                                    <SmallButton text="Edit" disabled />
                                    <SmallButton text="Duplicate" />
                                    <SmallButton text="Delete" disabled />
                                </div>
                            </footer>
                        </main>
                        <div className="flex w-[8px] flex-col items-center justify-center border-t border-l border-[#9a9a9a] bg-[#f2f2f2]">
                            <span className="mb-[10px] h-[16px] w-[3px] border-x border-[#9a9a9a]" />
                        </div>
                    </div>
                </div>
                <div className="h-[4px] border-b border-[#6a6a6a]" />
            </div>
        </div>
    );
}

export default App;
